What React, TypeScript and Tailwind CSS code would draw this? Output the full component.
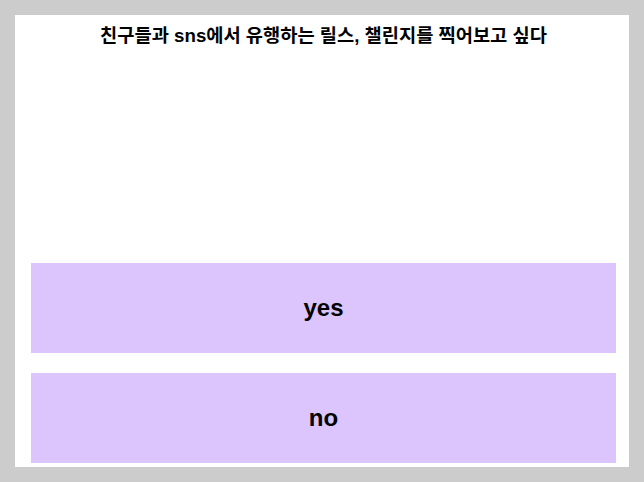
export default function App() {
  return (
    <div className="w-[644px] h-[482px] bg-[#cccccc] p-[15px]">
      <div className="w-[614px] h-[452px] bg-white flex flex-col pl-[16px] pr-[13px]">
        <div
          className="h-[43px] pt-[7px] text-center text-[18.7px] font-bold text-black leading-[28px]"
          style={{ fontFamily: '"Liberation Sans", "Noto Sans CJK KR", sans-serif' }}
        >
          친구들과 sns에서 유행하는 릴스, 챌린지를 찍어보고 싶다
        </div>
        <div className="h-[205px]" />
        <div className="flex flex-col gap-[20px]">
          <div
            className="h-[90px] bg-[#dcc5fd] flex items-center justify-center text-[24px] font-bold text-black"
            style={{ fontFamily: '"Liberation Sans", Arial, sans-serif' }}
          >
            yes
          </div>
          <div
            className="h-[90px] bg-[#dcc5fd] flex items-center justify-center text-[24px] font-bold text-black"
            style={{ fontFamily: '"Liberation Sans", Arial, sans-serif' }}
          >
            no
          </div>
        </div>
      </div>
    </div>
  );
}
